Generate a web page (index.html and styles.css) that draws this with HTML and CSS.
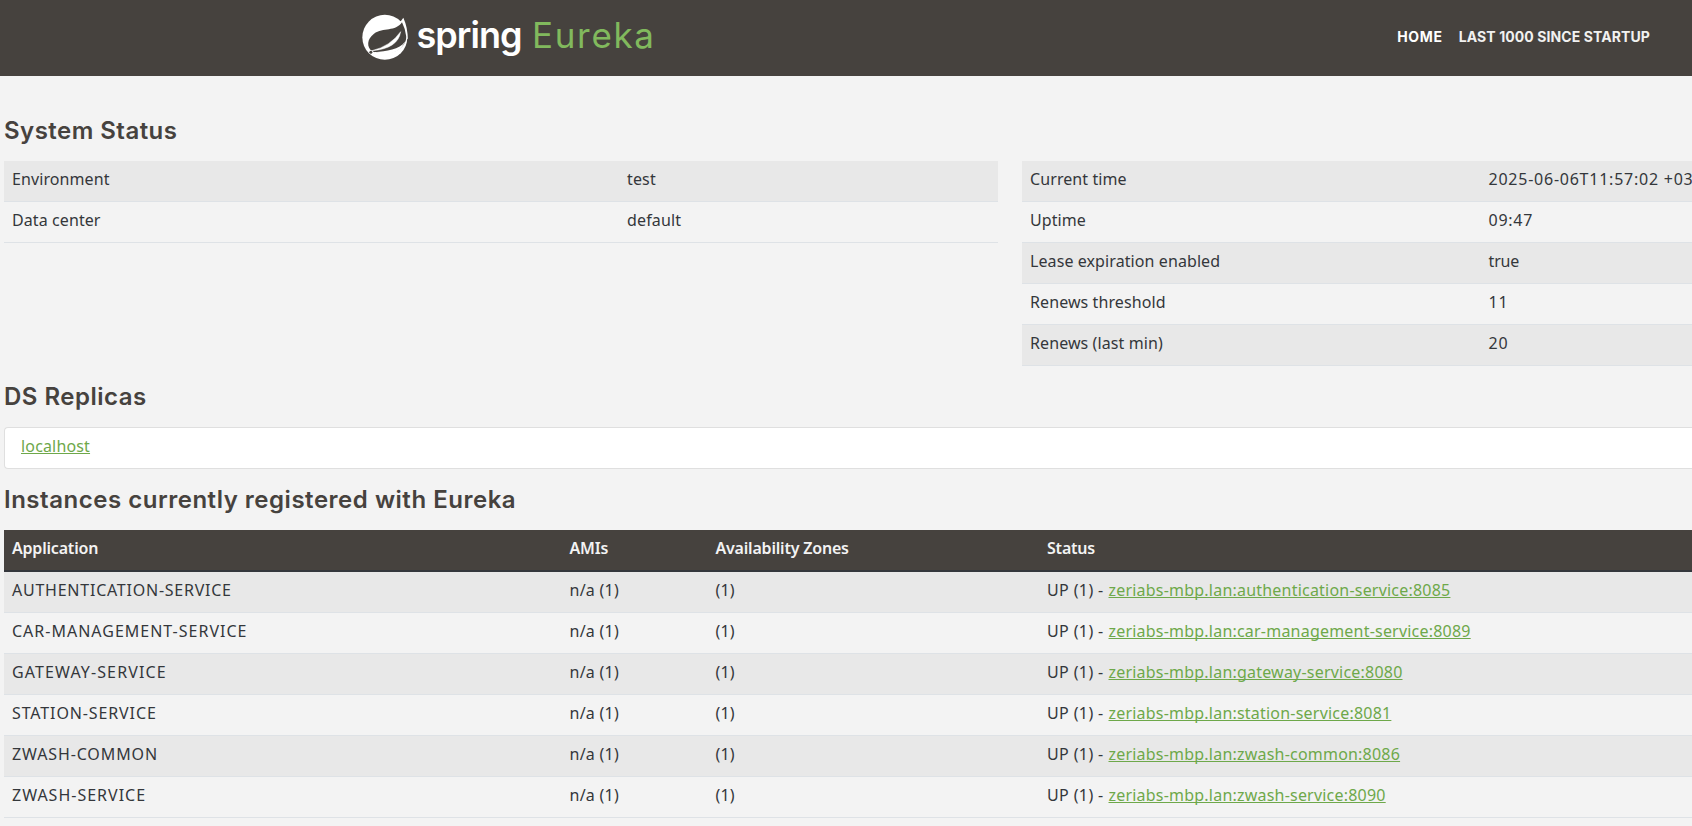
FILE: index.html
```html
<!DOCTYPE html>
<html lang="en">
<head>
<meta charset="utf-8">
<title>Eureka</title>
<link rel="stylesheet" href="styles.css">
</head>
<body>
<header class="navbar">
  <a class="brand" href="#">
    <svg class="logo" width="310" height="76" viewBox="0 0 310 76">
      <g transform="translate(3 10) scale(.33333)">
        <circle cx="80.500" cy="82" r="67.500" fill="#fff"/>
        <path d="M118 40Q131 34 136 23Q150 54 149 88L120 70Z" fill="#fff"/>
        <path d="M132 37C112 66 76 52 48 71C26 87 26 112 42 123C49 128 62 127 80 128C125 132 149 98 144 76Q142 57 132 37Z" fill="#46423e"/>
        <path d="M128 65Q120 116 42 122Q97 109 128 65Z" fill="#fff" stroke="#fff" stroke-width="1.500"/>
        <path d="M50 127C85 124 124 120 142 94Q125 132 82 131Z" fill="#fff"/>
        <circle cx="39" cy="127" r="6" fill="#fff"/>
        <circle cx="38.500" cy="127" r="4.500" fill="#46423e"/>
      </g>
      <text class="logo-spring" x="61.500" y="48" textLength="106">spring</text>
      <text class="logo-eureka" x="177" y="48" textLength="122">Eureka</text>
    </svg>
  </a>
  <nav class="menu"><a class="home" href="#">HOME</a><a href="#">LAST 1000 SINCE STARTUP</a></nav>
</header>
<main class="content">
  <h1>System Status</h1>
  <section class="status">
    <table class="grid left">
      <tr><td>Environment</td><td class="w1">test</td></tr>
      <tr><td>Data center</td><td class="w1">default</td></tr>
    </table>
    <table class="grid right">
      <tr><td>Current time</td><td class="num">2025-06-06T11:57:02 +03</td></tr>
      <tr><td>Uptime</td><td class="num">09:47</td></tr>
      <tr><td>Lease expiration enabled</td><td class="true">true</td></tr>
      <tr><td>Renews threshold</td><td class="num">11</td></tr>
      <tr><td>Renews (last min)</td><td class="num">20</td></tr>
    </table>
  </section>
  <h1 class="replicas">DS Replicas</h1>
  <ul class="list"><li><a href="#">localhost</a></li></ul>
  <h1 class="registered">Instances currently registered with Eureka</h1>
  <table class="grid instances">
    <thead><tr><th>Application</th><th>AMIs</th><th>Availability Zones</th><th>Status</th></tr></thead>
    <tbody>
      <tr><td class="app s1">AUTHENTICATION-SERVICE</td><td>n/a (1)</td><td>(1)</td><td><span class="up">UP (1) -</span><a href="#">zeriabs-mbp.lan:authentication-service:8085</a></td></tr>
      <tr><td class="app s2">CAR-MANAGEMENT-SERVICE</td><td>n/a (1)</td><td>(1)</td><td><span class="up">UP (1) -</span><a href="#">zeriabs-mbp.lan:car-management-service:8089</a></td></tr>
      <tr><td class="app s3">GATEWAY-SERVICE</td><td>n/a (1)</td><td>(1)</td><td><span class="up">UP (1) -</span><a href="#">zeriabs-mbp.lan:gateway-service:8080</a></td></tr>
      <tr><td class="app s4">STATION-SERVICE</td><td>n/a (1)</td><td>(1)</td><td><span class="up">UP (1) -</span><a href="#">zeriabs-mbp.lan:station-service:8081</a></td></tr>
      <tr><td class="app s4">ZWASH-COMMON</td><td>n/a (1)</td><td>(1)</td><td><span class="up">UP (1) -</span><a href="#">zeriabs-mbp.lan:zwash-common:8086</a></td></tr>
      <tr><td class="app s2">ZWASH-SERVICE</td><td>n/a (1)</td><td>(1)</td><td><span class="up">UP (1) -</span><a href="#">zeriabs-mbp.lan:zwash-service:8090</a></td></tr>
    </tbody>
  </table>
</main>
</body>
</html>
```
FILE: styles.css
```css
* { box-sizing: border-box; }
body {
  margin: 0;
  background: #f3f3f3;
  color: #34373b;
  font: 16px/24px "Noto Sans", sans-serif;
  letter-spacing: .09px;
}
a { color: #6ea84a; text-underline-offset: 1px; text-decoration-thickness: 1px; text-decoration-skip-ink: none; }

.navbar {
  display: flex;
  justify-content: space-between;
  height: 76px;
  padding: 0 42px 0 355px;
  background: #46423e;
}
.brand { display: block; height: 76px; }
.logo { display: block; }
.logo-spring { font: 600 36px Inter, sans-serif; fill: #fff; letter-spacing: 0; }
.logo-eureka { font: 400 35px Inter, sans-serif; fill: #81b95d; letter-spacing: 0; }
.menu {
  display: flex;
  gap: 16px;
  padding-top: 25px;
  font: 700 14px/24px Inter, sans-serif;
}
.menu a { color: #f1f1f0; text-decoration: none; }
.menu .home { color: #fff; letter-spacing: .7px; }

.content { padding-left: 4px; }
h1 {
  margin: 0;
  padding-top: 39px;
  height: 85px;
  color: #46423e;
  font: 600 24px/32px Inter, sans-serif;
  letter-spacing: .47px;
}
h1.replicas { height: 61px; padding-top: 15px; letter-spacing: .5px; }
h1.registered { height: 61px; padding-top: 15px; letter-spacing: .52px; }

.grid { border-collapse: separate; border-spacing: 0; table-layout: fixed; }
.grid td, .grid th {
  height: 41px;
  padding: 6px 8px 10px;
  border-bottom: 1px solid #dee2e6;
  text-align: left;
  vertical-align: top;
  white-space: nowrap;
}
.grid tr:nth-child(odd) td { background: #e8e8e8; }

.status { display: flex; align-items: flex-start; gap: 24px; height: 205px; }
.left { width: 994px; }
.left td:first-child { width: 615px; }
.right { width: 670px; }
.right td:first-child { width: 458.500px; }
.right td:last-child { padding-right: 0; }
.w1 { letter-spacing: .16px; }
.num { letter-spacing: .76px; }
.true { letter-spacing: -.15px; }

.list {
  margin: 0;
  padding: 0;
  height: 42px;
  list-style: none;
  background: #fff;
  border: 1px solid #dfdfdf;
  border-right: 0;
  border-radius: 4px 0 0 4px;
}
.list li { padding: 6px 16px; letter-spacing: .16px; }

.instances { width: 100%; }
.instances th {
  height: 42px;
  background: #46423e;
  border-bottom: 2px solid #34373c;
  color: #f3f3f3;
  font-weight: 600;
  letter-spacing: -.2px;
}
.instances th:nth-child(1) { width: 557.500px; }
.instances th:nth-child(2) { width: 146px; }
.instances th:nth-child(3) { width: 331.500px; }
.instances td:nth-child(2) { letter-spacing: .25px; }
.instances td a { letter-spacing: .21px; }
.up { display: inline-block; width: 61.500px; letter-spacing: .38px; }
.s1 { letter-spacing: .76px; }
.s2 { letter-spacing: 1px; }
.s3 { letter-spacing: 1.120px; }
.s4 { letter-spacing: .88px; }
```
